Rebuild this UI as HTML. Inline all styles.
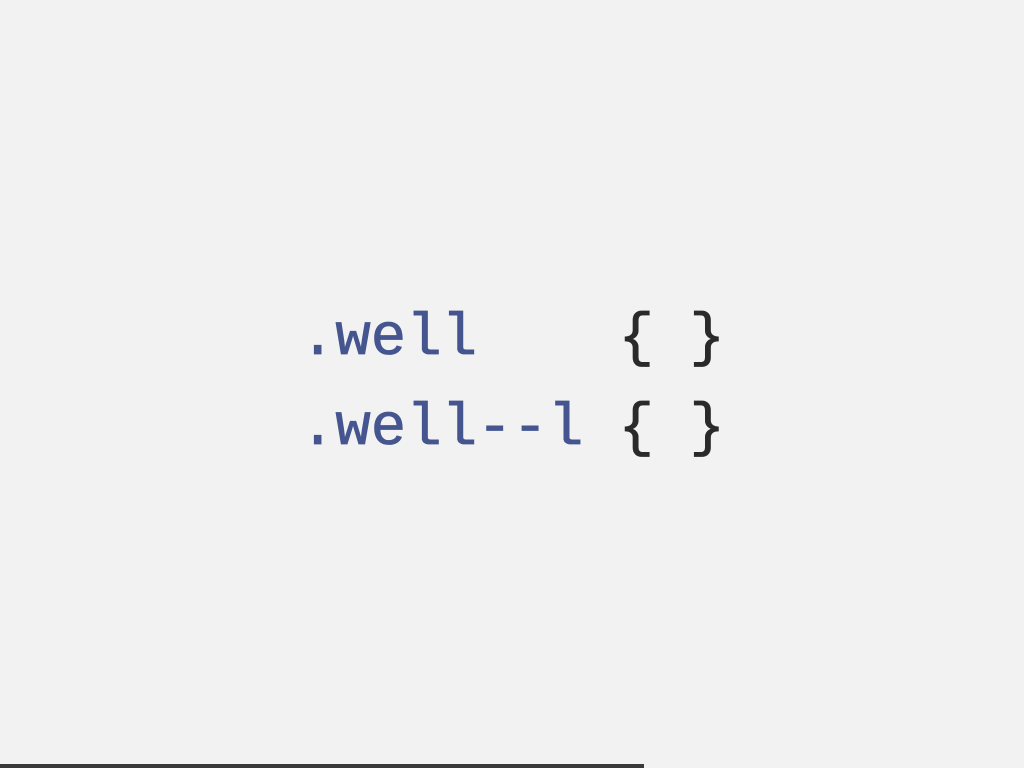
<!DOCTYPE html>
<html><head><style>
html,body{margin:0;padding:0;width:1024px;height:768px;background:#f2f2f2;overflow:hidden}
.code{position:absolute;left:300px;top:0;font-family:"Liberation Mono","Courier New",Courier,monospace;font-size:59px;line-height:90px;white-space:pre;color:#45558f;-webkit-text-stroke:0.8px currentColor}
.b{color:#2a2a2a}
.l{position:absolute;left:0;white-space:pre}
.bar{position:absolute;left:0;top:764px;width:644px;height:4px;background:#3a3a3a}
</style></head><body>
<div class="code">
<div class="l" style="top:294px">.well    <span class="b">{ }</span></div>
<div class="l" style="top:384px">.well--l <span class="b">{ }</span></div>
</div>
<div class="bar"></div>
</body></html>
